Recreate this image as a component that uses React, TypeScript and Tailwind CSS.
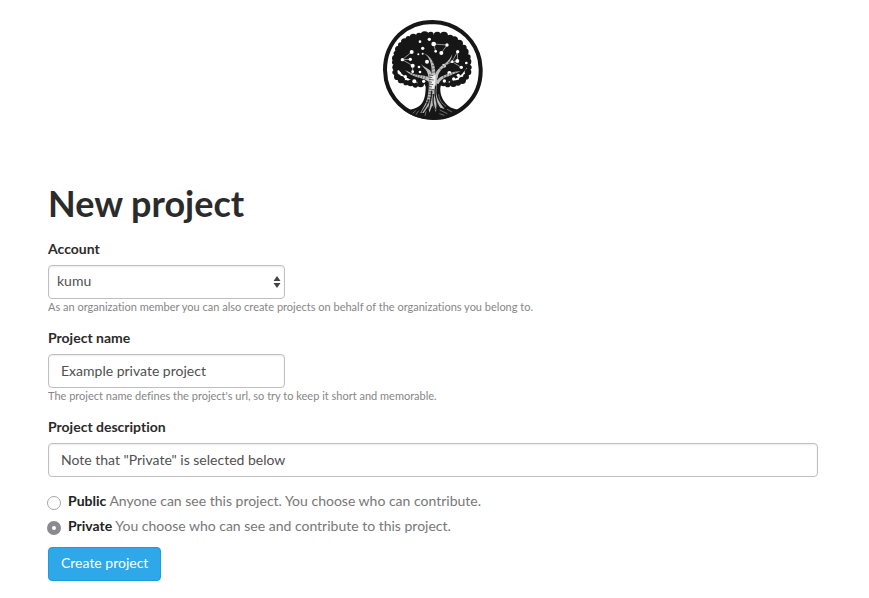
import type { ReactNode } from "react";

const canopyBumps: [number, number, number][] = [
  [140, 64, 12], [158, 62, 9], [178, 64, 11], [198, 65, 12], [216, 72, 10], [229, 78, 11],
  [243, 89, 12], [257, 101, 9], [261, 114, 11], [270, 129, 8], [269, 143, 11], [273, 160, 8],
  [270, 174, 10], [264, 188, 9], [253, 199, 11], [240, 206, 9], [226, 208, 11], [209, 212, 8],
  [196, 208, 9], [128, 210, 10], [112, 213, 8], [98, 207, 10], [84, 206, 8], [70, 197, 11],
  [58, 188, 10], [51, 175, 8], [54, 160, 11], [50, 145, 8], [53, 133, 11], [55, 118, 8],
  [62, 106, 11], [68, 93, 8], [80, 84, 11], [91, 74, 8], [106, 70, 11], [123, 65, 9],
];

const stars: [number, number, number][] = [
  [154, 76, 5], [167, 90, 7], [207, 93, 5], [190, 117, 6], [173, 112, 4], [134, 103, 5], [126, 83, 4],
  [121, 121, 3], [134, 119, 3], [101, 114, 6], [73, 137, 5], [97, 136, 5], [104, 155, 6],
  [147, 143, 6], [123, 159, 4], [239, 113, 5], [222, 143, 4], [238, 141, 6], [265, 147, 4],
  [250, 160, 5], [198, 155, 6], [214, 177, 6], [227, 195, 5], [241, 184, 5],
  [82, 188, 5], [65, 178, 4], [109, 202, 6], [137, 202, 5], [199, 201, 5], [104, 173, 4], [126, 174, 4],
];

function Logo() {
  return (
    <svg className="size-[100px]" viewBox="15 18 300 300" role="img" aria-label="Kumu">
      <path
        d="M164 24 L189 26 C250 38 293 82 305 138 L308 165 C309 205 295 243 268 270 C240 298 206 312 166 312 L138 309 C80 297 37 254 24 198 L21 168 C21 130 35 91 64 62 C92 36 124 24 164 24 Z"
        fill="#fff"
        stroke="#161616"
        strokeWidth="12"
      />
      <g fill="#161616">
        <ellipse cx="162" cy="137" rx="110" ry="75" />
        {canopyBumps.map(([x, y, r]) => (
          <circle key={`${x}-${y}`} cx={x} cy={y} r={r} />
        ))}
        <path d="M76 288 C96 289 112 285 123 277 C138 265 143 246 143 218 L134 195 L193 195 L187 222 C186 244 195 260 208 273 C220 284 236 288 254 287 C228 308 196 317 164 317 C133 317 102 308 76 288 Z" />
      </g>
      <g stroke="#ccc" strokeWidth="2" fill="none">
        <path d="M167 90 L207 93 L190 117 M167 90 L173 112" />
        <path d="M101 114 L73 137 L97 136 M73 137 L104 155 L104 173" />
        <path d="M239 113 L222 143 L238 141 L239 113 M222 143 L250 160 M222 143 L198 155" />
      </g>
      <g fill="#fff">
        {stars.map(([x, y, r]) => (
          <circle key={`${x}-${y}`} cx={x} cy={y} r={r} />
        ))}
      </g>
      <g fill="#bdbdbd">
        <path d="M153 206 C149 197 133 195 118 190 C100 185 91 177 81 169 C96 176 108 181 121 183 C142 185 157 187 165 201 Z" />
        <path d="M151 190 C150 176 146 169 138 162 L128 149 C139 160 149 161 157 170 L165 188 Z" />
        <path d="M160 190 C163 165 160 153 155 139 C151 128 145 124 138 118 C152 125 158 132 164 143 C172 156 172 173 172 190 Z" />
        <path d="M169 191 C172 170 185 159 200 149 C211 142 217 133 223 121 C220 137 214 147 202 156 C188 167 180 178 179 193 Z" />
        <path d="M173 206 C182 187 197 184 212 179 C226 174 235 172 248 172 C234 177 226 180 216 185 C199 190 189 195 181 211 Z" />
        <path d="M152 188 L178 188 C177 205 175 219 175 237 C177 257 188 269 200 285 L187 281 L176 265 L174 294 L163 274 L154 296 L151 276 L137 297 L127 297 L143 267 C151 247 154 220 152 188 Z" />
      </g>
      <g fill="#efefef">
        <path d="M158 184 L173 184 L170 226 L157 226 Z" />
      </g>
      <g stroke="#222" fill="none" strokeWidth="2">
        <path d="M153 183 L166 185 M152 189 L163 191 M153 196 L167 198 M152 203 L162 205 M153 210 L166 212 M153 217 L162 219 M153 225 L168 227 M152 233 L163 235 M151 241 L167 243 M148 249 L162 251 M145 257 L160 259 M142 265 L154 267" />
      </g>
      <g stroke="#222" fill="none" strokeWidth="1.5">
        <path d="M98 175 L95 180 M105 178 L103 185 M112 180 L110 187 M119 182 L117 190 M127 183 L125 192 M135 184 L133 194 M143 186 L140 197 M231 174 L234 181 M222 177 L225 185 M214 178 L217 188 M205 181 L208 191 M196 184 L199 194 M217 138 L222 141 M210 145 L216 148 M202 149 L207 155 M193 154 L199 161 M184 162 L190 168 M158 136 L164 133 M161 146 L169 143 M162 156 L171 153 M162 166 L172 163 M162 175 L173 173" />
      </g>
      <g stroke="#222" fill="none" strokeWidth="4">
        <path d="M173 215 C169 235 171 256 182 280 M161 230 C161 247 157 264 152 285 M167 240 C164 257 166 277 172 289 M152 257 C149 271 141 282 131 296" />
      </g>
      <g stroke="#999" fill="none" strokeWidth="2">
        <path d="M104 298 L113 290 M114 302 L122 290 M185 288 L208 299 M184 299 L199 304 M207 286 L222 294 M144 292 L141 305 M182 241 C183 258 193 270 204 277" />
      </g>
    </svg>
  );
}

function Field({ id, label, help, children }: { id: string; label: string; help?: string; children: ReactNode }) {
  return (
    <div className="flex flex-col items-start">
      <label htmlFor={id} className="mb-1.5 text-sm leading-5 font-bold text-[#2b2b2b]">
        {label}
      </label>
      {children}
      {help && <p className="mb-0.5 text-[11px] leading-4 text-[#868686]">{help}</p>}
    </div>
  );
}

function Visibility({ value, detail, checked }: { value: string; detail: string; checked?: boolean }) {
  return (
    <label className="flex items-start gap-[7px] text-sm leading-5 text-[#777]">
      <input
        type="radio"
        name="visibility"
        value={value}
        defaultChecked={checked}
        className="mt-[5px] size-[14px] shrink-0 appearance-none rounded-full border border-[#a6a6a6] bg-white checked:border-[5px] checked:border-[#8b8a90]"
      />
      <span>
        <strong className="font-bold text-[#222]">{value}</strong> {detail}
      </span>
    </label>
  );
}

const inputStyle =
  "h-[34px] rounded border border-[#bfbfbf] bg-white px-3 pb-0.5 text-sm text-[#505050] shadow-[inset_0_1px_2px_rgba(0,0,0,0.08)] outline-none";

export default function App() {
  return (
    <main className="bg-white pt-5 pr-[51px] pb-4 pl-12 font-['Lato',sans-serif] [font-variant-ligatures:none]">
      <header className="flex justify-center">
        <Logo />
      </header>
      <form className="mt-[63px]" onSubmit={(e) => e.preventDefault()}>
        <h1 className="text-[36px] leading-10 font-bold text-[#2b2b2b]">New project</h1>
        <div className="mt-4 flex flex-col gap-[11px]">
          <Field
            id="account"
            label="Account"
            help="As an organization member you can also create projects on behalf of the organizations you belong to."
          >
            <div className="relative w-[237px]">
              <select
                id="account"
                className="h-[34px] w-full appearance-none rounded border border-[#bfbfbf] bg-white px-2 pb-0.5 text-sm text-[#505050] shadow-[inset_0_1px_2px_rgba(0,0,0,0.08)] outline-none"
              >
                <option>kumu</option>
              </select>
              <svg className="pointer-events-none absolute top-[11px] right-1 h-3 w-2" viewBox="0 0 8 12" fill="#444" aria-hidden="true">
                <path d="M4 0 L7.5 5 H0.5 Z M4 12 L7.5 7 H0.5 Z" />
              </svg>
            </div>
          </Field>
          <Field
            id="name"
            label="Project name"
            help="The project name defines the project's url, so try to keep it short and memorable."
          >
            <input id="name" type="text" defaultValue="Example private project" className={`${inputStyle} w-[237px]`} />
          </Field>
          <Field id="description" label="Project description">
            <input id="description" type="text" defaultValue={'Note that "Private" is selected below'} className={`${inputStyle} w-full`} />
          </Field>
        </div>
        <fieldset aria-label="Visibility" className="-ml-px mt-3.5 flex flex-col gap-[5px]">
          <Visibility value="Public" detail="Anyone can see this project. You choose who can contribute." />
          <Visibility value="Private" detail="You choose who can see and contribute to this project." checked />
        </fieldset>
        <button type="submit" className="mt-[11px] h-[34px] rounded border border-[#1c9be0] bg-[#2ea8e8] px-3 pb-0.5 text-sm text-white">
          Create project
        </button>
      </form>
    </main>
  );
}
